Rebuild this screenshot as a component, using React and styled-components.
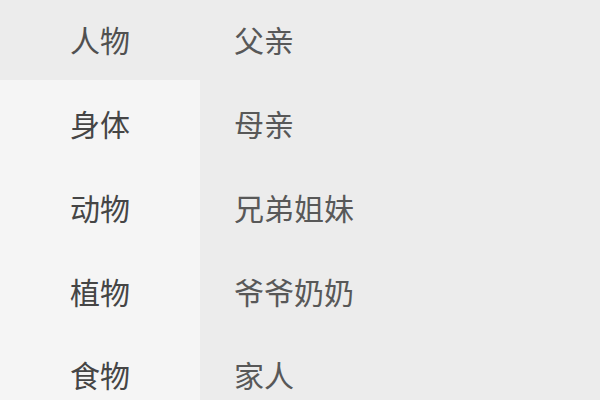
import styled, { createGlobalStyle } from "styled-components";

const GlobalStyle = createGlobalStyle`
  html, body {
    margin: 0;
    padding: 0;
    background: #ececec;
  }
  body {
    font-family: "Noto Sans CJK SC", "Noto Sans", sans-serif;
  }
`;

const Page = styled.div`
  display: flex;
  width: 600px;
  height: 400px;
  overflow: hidden;
`;

const Sidebar = styled.ul`
  margin: 0;
  padding: 0;
  list-style: none;
  width: 200px;
  background: #f5f5f5;
`;

const Category = styled.li`
  box-sizing: border-box;
  height: 83.75px;
  padding-bottom: 5px;
  display: flex;
  align-items: center;
  justify-content: center;
  font-size: 30px;
  color: ${(p) => (p.$active ? "#505050" : "#454545")};
  background: ${(p) =>
    p.$active ? "linear-gradient(#ececec 0 80px, transparent 80px)" : "transparent"};
`;

const Content = styled.ul`
  flex: 1;
  margin: 0;
  padding: 0;
  list-style: none;
  background: #ececec;
`;

const Item = styled.li`
  box-sizing: border-box;
  height: 83.75px;
  padding: 0 0 5px 34px;
  display: flex;
  align-items: center;
  font-size: 30px;
  color: #585858;
`;

const categories = ["人物", "身体", "动物", "植物", "食物"];
const items = ["父亲", "母亲", "兄弟姐妹", "爷爷奶奶", "家人"];

export default function App() {
  return (
    <>
      <GlobalStyle />
      <Page>
        <Sidebar>
          {categories.map((c, i) => (
            <Category key={c} $active={i === 0}>
              {c}
            </Category>
          ))}
        </Sidebar>
        <Content>
          {items.map((t) => (
            <Item key={t}>{t}</Item>
          ))}
        </Content>
      </Page>
    </>
  );
}
